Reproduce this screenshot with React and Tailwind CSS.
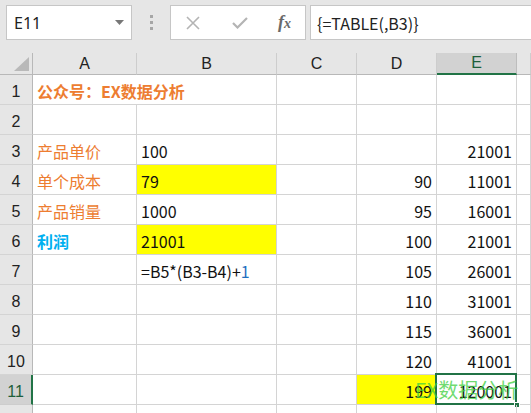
import React from "react";

const CELL_FONT = "font-['DengXian','Noto_Sans_CJK_SC',sans-serif]";

// spreadsheet contents, row by row: [A, B, C, D, E]
const rows = [
  { n: 1 },
  { n: 2 },
  { n: 3, a: "产品单价", b: "100", e: "21001" },
  { n: 4, a: "单个成本", b: "79", bYellow: true, d: "90", e: "11001" },
  { n: 5, a: "产品销量", b: "1000", d: "95", e: "16001" },
  { n: 6, a: "利润", aBlue: true, b: "21001", bYellow: true, d: "100", e: "21001" },
  { n: 7, formula: true, d: "105", e: "26001" },
  { n: 8, d: "110", e: "31001" },
  { n: 9, d: "115", e: "36001" },
  { n: 10, d: "120", e: "41001" },
  { n: 11, d: "199", dYellow: true, e: "120001", selected: true },
  { n: 12, hidden: true },
];

const cols = ["A", "B", "C", "D", "E", ""];

function Toolbar() {
  return (
    <div className="flex h-[53px] items-start bg-[#e6e6e6] pt-[5px]">
      {/* Name box */}
      <div className="ml-[6px] flex h-[35px] w-[126px] items-center justify-between border border-[#c6c6c6] bg-white pl-[7px] pr-[7px]">
        <span className="font-['Noto_Sans','Liberation_Sans',sans-serif] text-[16px] text-[#222]">E11</span>
        <svg width="9" height="5" viewBox="0 0 9 5">
          <path d="M0 0h9L4.5 5z" fill="#777" />
        </svg>
      </div>

      {/* grip dots */}
      <div className="flex h-[35px] w-[38px] flex-col items-center justify-center gap-[3px]">
        <span className="h-[3px] w-[3px] bg-[#a6a6a6]" />
        <span className="h-[3px] w-[3px] bg-[#a6a6a6]" />
        <span className="h-[3px] w-[3px] bg-[#a6a6a6]" />
      </div>

      {/* cancel / enter / fx */}
      <div className="flex h-[35px] w-[136px] items-center border border-[#c6c6c6] bg-white">
        <svg className="ml-[15px]" width="14" height="14" viewBox="0 0 14 14">
          <path d="M1 1l12 12M13 1L1 13" stroke="#b4b4b4" strokeWidth="1.6" />
        </svg>
        <svg className="ml-[32px]" width="16" height="12" viewBox="0 0 16 12">
          <path d="M1 6l4.5 4.5L15 1" stroke="#b4b4b4" strokeWidth="2.2" fill="none" />
        </svg>
        <span className="ml-[30px] font-['Liberation_Serif',serif] text-[18px] italic font-bold text-[#6a6a6a]">
          f<span className="text-[14px]">x</span>
        </span>
      </div>

      {/* formula input */}
      <div className="ml-[4px] flex h-[35px] flex-1 items-center border-y border-l border-[#c6c6c6] bg-white pl-[6px]">
        <span className={`${CELL_FONT} text-[16px] text-[#222]`}>{"{=TABLE(,B3)}"}</span>
      </div>
    </div>
  );
}

function Cell({ children, color = "text-[#111]", className = "" }) {
  return (
    <div
      className={`flex h-[30px] items-end overflow-visible whitespace-nowrap border-b border-r border-[#d4d4d4] px-[4px] pb-[3px] leading-[20px] ${CELL_FONT} text-[16px] ${color} ${className}`}
    >
      {children}
    </div>
  );
}

function App() {
  return (
    <div className="h-[413px] w-[531px] overflow-hidden bg-white">
      <Toolbar />

      <div className="relative grid grid-cols-[33px_104px_140px_80px_80px_80px_1fr]">
        {/* corner */}
        <div className="relative h-[22px] border-b border-r border-[#b8b8b8] bg-[#e6e6e6]">
          <svg className="absolute bottom-[3px] right-[3px]" width="15" height="14" viewBox="0 0 15 14">
            <path d="M15 0V14H0z" fill="#b9b9b9" />
          </svg>
        </div>
        {cols.map((c, i) => (
          <div
            key={i}
            className={`flex h-[22px] items-center justify-center border-r font-['Liberation_Sans',sans-serif] text-[16px] leading-none ${
              c === "E"
                ? "border-b-2 border-b-[#217346] border-r-[#bdbdbd] bg-[#d2d2d2] text-[#1e5e3a]"
                : "border-b border-b-[#b8b8b8] border-r-[#cdcdcd] bg-[#e6e6e6] text-[#222]"
            }`}
          >
            {c}
          </div>
        ))}

        {rows.map((r) => (
          <React.Fragment key={r.n}>
            <div
              className={`flex h-[30px] items-end justify-center pb-[2px] font-['Liberation_Sans',sans-serif] text-[16px] leading-[20px] ${
                r.selected
                  ? "border-b border-r-2 border-b-[#cdcdcd] border-r-[#217346] bg-[#d2d2d2] text-[#1e5e3a]"
                  : "border-b border-r border-b-[#d4d4d4] border-r-[#b8b8b8] bg-[#e6e6e6] text-[#222]"
              }`}
            >
              {r.hidden ? "" : r.n}
            </div>

            {r.n === 1 ? (
              <Cell color="text-[#ed7d31]" className="col-span-2 font-bold">
                公众号：EX数据分析
              </Cell>
            ) : (
              <>
                <Cell color={r.aBlue ? "text-[#00b0f0]" : "text-[#ed7d31]"} className={r.aBlue ? "font-bold" : ""}>
                  {r.a}
                </Cell>
                <Cell className={r.bYellow ? "bg-[#ffff00]" : ""}>
                  {r.formula ? (
                    <>
                      =B5*(B3-B4)+<span className="text-[#1f6fbf]">1</span>
                    </>
                  ) : (
                    r.b
                  )}
                </Cell>
              </>
            )}
            <Cell />
            <Cell className={`justify-end ${r.dYellow ? "bg-[#ffff00]" : ""}`}>{r.d}</Cell>
            <Cell className="relative justify-end">
              {r.e}
              {r.selected && (
                <>
                  <div className="absolute -left-[2px] -top-[2px] bottom-[-1px] right-[-1px] border-2 border-[#217346]" />
                  <div className="absolute bottom-[-4px] right-[-4px] h-[6px] w-[6px] border border-white bg-[#217346]" />
                </>
              )}
            </Cell>
            <Cell />
          </React.Fragment>
        ))}

        {/* watermark over the table */}
        <div className="pointer-events-none absolute left-[415px] top-[327px] whitespace-nowrap font-['Noto_Sans_CJK_SC',sans-serif] text-[20px] leading-none text-[#3fcf3f] opacity-75">
          EX数据分析
        </div>
      </div>
    </div>
  );
}

export default App;
